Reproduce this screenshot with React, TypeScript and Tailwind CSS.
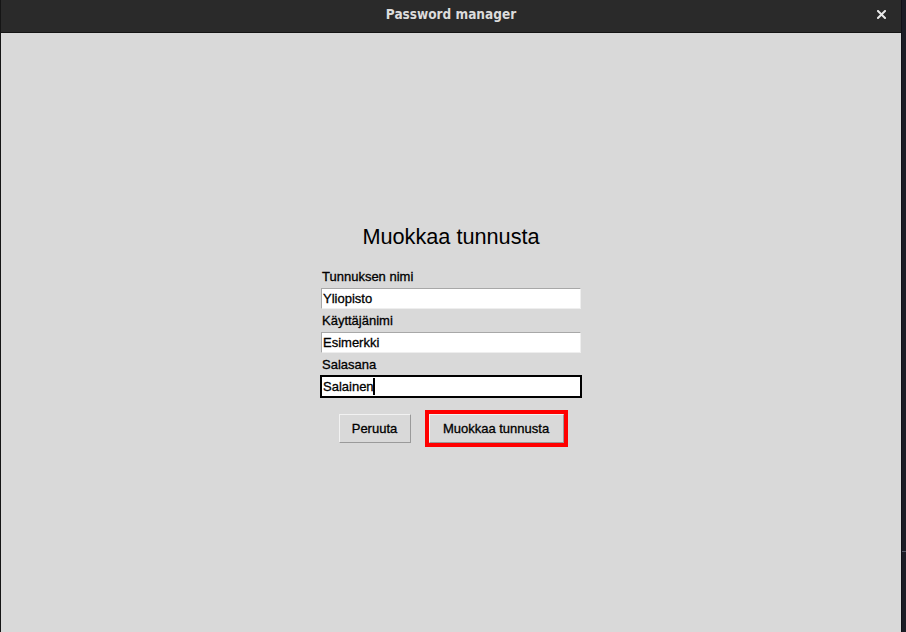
export default function App() {
  return (
    <div className="flex h-[632px] w-[906px] bg-[#1c1d26]">
      <div className="flex w-[901px] flex-col border-l border-[#151515]">
        <TitleBar />
        <div className="flex flex-1 flex-col items-center bg-[#d9d9d9] pt-[192px] font-['Liberation_Sans',Arial,sans-serif] text-black">
          <h1 className="h-[24px] text-[21.7px] leading-[24px]">Muokkaa tunnusta</h1>
          <div className="mt-[17px] flex w-[262px] flex-col">
            <FieldLabel text="Tunnuksen nimi" />
            <Entry value="Yliopisto" />
            <FieldLabel text="Käyttäjänimi" />
            <Entry value="Esimerkki" />
            <FieldLabel text="Salasana" />
            <Entry value="Salainen" focused />
          </div>
          <div className="mt-[12px] ml-[4px] flex h-[37px] items-center gap-[14px]">
            <TkButton label="Peruuta" width="w-[72px]" />
            <div className="border-4 border-[#ff0000]">
              <TkButton label="Muokkaa tunnusta" width="w-[135px]" />
            </div>
          </div>
        </div>
      </div>
      <div className="flex flex-1 flex-col border-l border-[#111118] pt-[551px]">
        <div className="h-px w-full bg-[#555866]" />
      </div>
    </div>
  );
}

function TitleBar() {
  return (
    <div className="relative flex h-[33px] items-center justify-center border-b border-[#141414] bg-[#2a2a2a]">
      <span className="pb-[3px] font-['DejaVu_Sans_Condensed','DejaVu_Sans',sans-serif] text-[13.5px] font-bold text-[#dcdcdc]">
        Password manager
      </span>
      <svg
        className="absolute right-[15px] top-[10px]"
        width="9"
        height="9"
        viewBox="0 0 9 9"
        stroke="#e8e8e8"
        strokeWidth="2"
        strokeLinecap="square"
      >
        <path d="M1 1 L8 8 M8 1 L1 8" />
      </svg>
    </div>
  );
}

function FieldLabel({ text }: { text: string }) {
  return (
    <div className="h-[21px] pl-[2px] text-[13px] leading-[21px] [-webkit-text-stroke:0.3px_black]">{text}</div>
  );
}

function Entry({ value, focused = false }: { value: string; focused?: boolean }) {
  return (
    <div className={`h-[23px] border ${focused ? "border-black" : "border-transparent"}`}>
      <div
        className={`flex h-full items-center border bg-white pl-[1px] text-[13px] ${
          focused ? "border-black" : "border-t-[#a8a8a8] border-l-[#a8a8a8] border-r-[#eeeeee] border-b-[#eeeeee]"
        }`}
      >
        <span className="[-webkit-text-stroke:0.3px_black]">{value}</span>
        {focused && <span className="ml-[-1px] h-[17px] w-[2px] bg-black" />}
      </div>
    </div>
  );
}

function TkButton({ label, width }: { label: string; width: string }) {
  return (
    <button
      className={`${width} h-[29px] border border-t-[#f2f2f2] border-l-[#f2f2f2] border-r-[#9a9a9a] border-b-[#9a9a9a] bg-[#d9d9d9] text-[13px] [-webkit-text-stroke:0.3px_black]`}
    >
      {label}
    </button>
  );
}
